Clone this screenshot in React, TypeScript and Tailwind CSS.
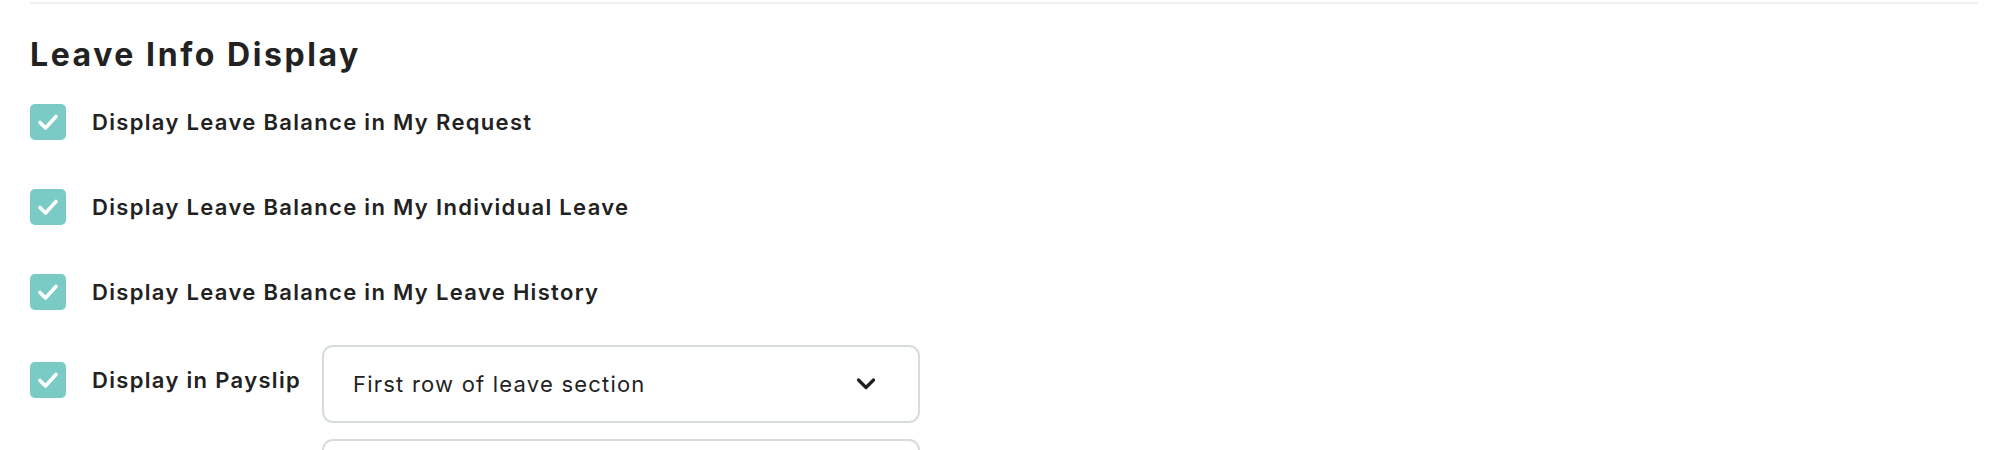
import { useState } from 'react';

interface CheckRowProps {
  label: string;
  checked: boolean;
  onToggle: () => void;
}

function CheckBox({ checked, onToggle }: { checked: boolean; onToggle: () => void }) {
  return (
    <button
      onClick={onToggle}
      className={
        'flex items-center justify-center w-9 h-9 shrink-0 rounded-[5px] ' +
        (checked ? 'bg-[#7acbc5]' : 'bg-white border-2 border-[#d5dcdc]')
      }
      aria-label="Toggle"
    >
      {checked && (
        <svg width="36" height="36" viewBox="0 0 36 36" fill="none">
          <path
            d="M10 18.5 L15.5 24 L26 12.5"
            stroke="white"
            strokeWidth="3.6"
            strokeLinecap="round"
            strokeLinejoin="round"
          />
        </svg>
      )}
    </button>
  );
}

function CheckRow({ label, checked, onToggle }: CheckRowProps) {
  return (
    <div className="flex items-center gap-[26px] h-9">
      <CheckBox checked={checked} onToggle={onToggle} />
      <span className="text-[22px] font-semibold tracking-[0.06em] text-[#222]">{label}</span>
    </div>
  );
}

function Select({ value }: { value?: string }) {
  return (
    <button className="flex items-center justify-between w-[598px] h-[78px] shrink-0 pl-[29px] pr-[42px] rounded-[11px] border-2 border-[#d7dddd] bg-white text-left">
      <span className="text-[22px] tracking-[0.055em] text-[#222]">{value}</span>
      <svg width="20" height="14" viewBox="0 0 20 14" fill="none">
        <path
          d="M2.5 3 L10 10.5 L17.5 3"
          stroke="#1f1f1f"
          strokeWidth="3.2"
          strokeLinecap="round"
          strokeLinejoin="round"
        />
      </svg>
    </button>
  );
}

export default function App() {
  const [checks, setChecks] = useState([true, true, true, true]);

  const toggle = (i: number) => {
    setChecks(checks.map((c, j) => (j === i ? !c : c)));
  };

  const labels = [
    'Display Leave Balance in My Request',
    'Display Leave Balance in My Individual Leave',
    'Display Leave Balance in My Leave History',
  ];

  return (
    <div className="w-[2010px] h-[450px] overflow-hidden bg-white font-['Inter','Noto_Sans',sans-serif]">
      <div className="px-[30px]">
        {/* Divider */}
        <div className="mt-[2px] h-[2px] w-[1948px] bg-[#f0f0f0]" />

        {/* Section title */}
        <h2 className="mt-[31px] text-[32px] leading-[40px] font-bold tracking-[0.08em] text-[#222]">Leave Info Display</h2>

        {/* Toggles */}
        <div className="mt-[29px] flex flex-col gap-[49px]">
          {labels.map((label, i) => (
            <CheckRow key={label} label={label} checked={checks[i]} onToggle={() => toggle(i)} />
          ))}
        </div>

        {/* Payslip row */}
        <div className="mt-[35px] flex items-start gap-[21px]">
          <div className="mt-[17px]">
            <CheckRow label="Display in Payslip" checked={checks[3]} onToggle={() => toggle(3)} />
          </div>
          <div className="flex flex-col gap-[16px]">
            <Select value="First row of leave section" />
            <Select />
          </div>
        </div>
      </div>
    </div>
  );
}
